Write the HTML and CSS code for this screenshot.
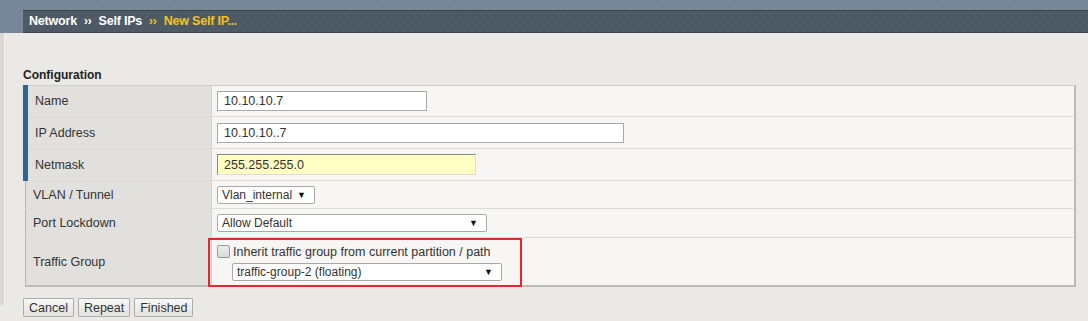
FILE: index.html
```html
<!DOCTYPE html>
<html lang="en">
<head>
    <meta charset="UTF-8">
    <title>New Self IP</title>
    <link rel="stylesheet" href="styles.css">
</head>
<body>
    <div class="topband">
        <div class="crumbs">
            <span>Network</span>
            <span class="sep">&rsaquo;&rsaquo;</span>
            <span>Self IPs</span>
            <span class="sep cur">&rsaquo;&rsaquo;</span>
            <span class="cur">New Self IP...</span>
        </div>
    </div>

    <div class="page">
        <div class="sidestrip"></div>
        <div class="main">
            <div class="section-title">Configuration</div>
            <table class="config">
                <tr class="r1 req">
                    <td class="label">Name</td>
                    <td class="value"><input class="txt w210" type="text" value="10.10.10.7"></td>
                </tr>
                <tr class="r2 req">
                    <td class="label">IP Address</td>
                    <td class="value"><input class="txt w407" type="text" value="10.10.10..7"></td>
                </tr>
                <tr class="r3 req">
                    <td class="label">Netmask</td>
                    <td class="value"><input class="txt w259 focus" type="text" value="255.255.255.0"></td>
                </tr>
                <tr class="r4">
                    <td class="label">VLAN / Tunnel</td>
                    <td class="value"><span class="sel w98">Vlan_internal</span></td>
                </tr>
                <tr class="r5">
                    <td class="label">Port Lockdown</td>
                    <td class="value"><span class="sel w270">Allow Default</span></td>
                </tr>
                <tr class="r6">
                    <td class="label">Traffic Group</td>
                    <td class="value tg">
                        <div class="highlight"></div>
                        <label class="chk"><span class="box"></span>Inherit traffic group from current partition / path</label>
                        <span class="sel w270 indent">traffic-group-2 (floating)</span>
                    </td>
                </tr>
            </table>
            <div class="buttons">
                <button class="btn">Cancel</button>
                <button class="btn">Repeat</button>
                <button class="btn">Finished</button>
            </div>
        </div>
    </div>
</body>
</html>
```

FILE: styles.css
```css
body {
    margin: 0;
    font-family: "Liberation Sans", Arial, sans-serif;
    font-size: 12px;
    color: #333;
    background: #eae9e5;
}
.topband {
    height: 33px;
    padding-top: 10px;
    padding-left: 23px;
    box-sizing: border-box;
    background: repeating-linear-gradient(135deg, #7a8798 0, #7a8798 3px, #76849a 3px, #76849a 6px);
}
.crumbs {
    height: 23px;
    box-sizing: border-box;
    border-top: 1px solid #3a414a;
    border-bottom: 1px solid #3a414a;
    background: repeating-linear-gradient(135deg, #505b68 0, #505b68 3px, #4d5865 3px, #4d5865 6px);
    color: #fff;
    font-weight: bold;
    font-size: 12.5px;
    line-height: 20px;
    padding-left: 6px;
    display: flex;
    gap: 4px;
    letter-spacing: -0.2px;
}
.crumbs .sep {
    font-size: 12px;
    padding: 0 3px;
}
.crumbs .cur {
    color: #f6c21c;
}
.page {
    display: flex;
}
.sidestrip {
    width: 4px;
    height: 272px;
    background: #d9d8d5;
    border-right: 1px solid #f3f3f1;
}
.main {
    padding-left: 18px;
    padding-top: 35px;
    width: 1053px;
}
.section-title {
    font-weight: bold;
    height: 17px;
    line-height: 14px;
    color: #222;
}
.config {
    border-collapse: collapse;
    width: 1053px;
    border-left: 1px solid #b5b4b0;
    border-right: 2px solid #bcbbb7;
    border-bottom: 2px solid #bcbbb7;
    border-top: 1px solid #d0cfcb;
}
.config td {
    padding: 0;
    border-bottom: 1px solid #dcdbd8;
    vertical-align: middle;
}
.config tr:last-child td {
    border-bottom: none;
}
.label {
    width: 178px;
    background: #e1e0dd;
    border-right: 1px solid #d2d1cd;
    padding-left: 7px !important;
    font-size: 12.5px;
}
.req .label {
    border-left: 5px solid #2f6496;
    padding-left: 7px !important;
    width: 173px;
}
.value {
    background: #f7f6f4;
    padding-left: 5px !important;
}
.r1 td { height: 30px; }
.r2 td { height: 31px; }
.r3 td { height: 31px; }
.r4 td { height: 27px; }
.r5 td { height: 28px; }
.r6 td { height: 47px; }
.txt {
    display: block;
    height: 20px;
    box-sizing: border-box;
    border: 1px solid #aaa;
    background: #fff;
    font-family: "Liberation Sans", Arial, sans-serif;
    font-size: 12.5px;
    color: #333;
    padding: 0 6px;
    margin: 0;
}
.txt.focus {
    background: #fffec3;
    border-top: 1px solid #888;
    border-left: 1px solid #888;
    border-right: 1px solid #ddd;
    border-bottom: 1px solid #ddd;
    height: 21px;
}
.w210 { width: 210px; }
.w407 { width: 407px; }
.w259 { width: 259px; }
.w98 { width: 98px; }
.w270 { width: 270px; }
.sel {
    display: block;
    position: relative;
    height: 18px;
    box-sizing: border-box;
    border: 1px solid #a9a9a9;
    border-radius: 2px;
    background: #fff;
    line-height: 16px;
    padding-left: 4px;
    color: #333;
    font-size: 12px;
}
.sel::after {
    content: "\25BC";
    position: absolute;
    right: 8px;
    top: 0;
    font-size: 9px;
    color: #111;
}
.tg {
    position: relative;
}
.highlight {
    position: absolute;
    left: -4px;
    top: 0;
    width: 314px;
    height: 49px;
    box-sizing: border-box;
    border: 2px solid #e5262b;
}
.chk {
    display: flex;
    align-items: center;
    height: 16px;
    margin-top: 1px;
    gap: 3px;
    font-size: 12.5px;
}
.box {
    width: 13px;
    height: 13px;
    box-sizing: border-box;
    border: 1px solid #9a9a9a;
    border-radius: 2px;
    background: linear-gradient(#eee, #d9d9d9);
}
.indent {
    margin-left: 15px;
    margin-top: 3px;
}
.buttons {
    display: flex;
    gap: 4px;
    margin-top: 11px;
}
.btn {
    height: 19px;
    margin: 0;
    padding: 0 5px;
    border: 1px solid #adadad;
    border-radius: 1px;
    background: linear-gradient(#f8f8f8, #e2e2e2);
    font-family: "Liberation Sans", Arial, sans-serif;
    font-size: 12.5px;
    color: #333;
}
```
